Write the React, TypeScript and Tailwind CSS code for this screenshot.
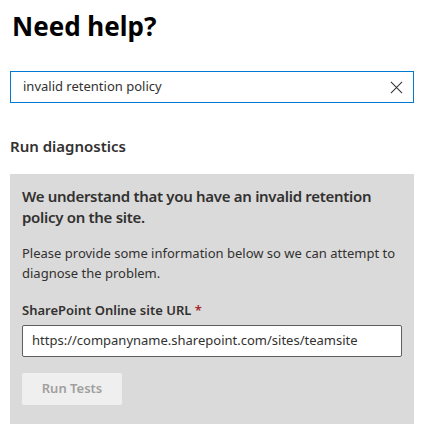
import React from "react";

export default function App() {
  const font = { fontFamily: '"Segoe UI", "Noto Sans", "Open Sans", sans-serif' };
  return (
    <div className="w-[429px] h-[432px] bg-white text-[#323130]" style={font}>
      <div className="pl-[12px] pt-[8px]">
        <h1 className="text-[26px] leading-[36px] font-bold text-black">Need help?</h1>
      </div>
      <div className="ml-[10px] w-[404px] mt-[27px] h-[32px] border border-[#0078d4] flex items-center pl-[12px] pr-[10px]">
        <span className="flex-1 text-[13px] text-[#323130]">invalid retention policy</span>
        <svg width="13" height="13" viewBox="0 0 14 14" className="text-[#323130]">
          <path d="M1 1 L13 13 M13 1 L1 13" stroke="currentColor" strokeWidth="1.1" fill="none" />
        </svg>
      </div>
      <div className="px-[10px] mt-[33px]">
        <h2 className="text-[15px] leading-[20px] font-semibold">Run diagnostics</h2>
      </div>
      <div className="ml-[10px] w-[404px] mt-[18px] h-[250px] bg-[#dadada] px-[12px] pt-[12px]">
        <p className="text-[15px] leading-[21px] font-semibold tracking-[-0.3px] whitespace-nowrap">
          We understand that you have an invalid retention
          <br />
          policy on the site.
        </p>
        <p className="text-[13px] leading-[20px] mt-[15px]">
          Please provide some information below so we can attempt to diagnose the problem.
        </p>
        <label className="block text-[13px] leading-[20px] font-semibold mt-[17px]">
          SharePoint Online site URL <span className="text-[#a4262c]">*</span>
        </label>
        <div className="mt-[5px] h-[32px] bg-white border border-[#605e5c] rounded-[2px] flex items-center px-[9px] text-[13px]">
          https://companyname.sharepoint.com/sites/teamsite
        </div>
        <button className="mt-[16px] w-[100px] h-[32px] bg-[#efefef] rounded-[2px] text-[13px] font-semibold text-[#a19f9d]">
          Run Tests
        </button>
      </div>
    </div>
  );
}
